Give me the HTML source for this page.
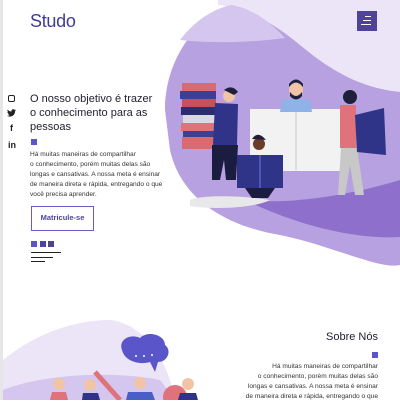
<!DOCTYPE html>
<html><head><meta charset="utf-8"><style>
*{margin:0;padding:0;box-sizing:border-box}
body{width:400px;height:400px;overflow:hidden;background:#fff;font-family:"Liberation Sans",sans-serif;position:relative}
.edge{position:absolute;left:0;top:0;width:3px;height:400px;background:#e6e6e6}
.abs{position:absolute}
.logo{left:30px;top:11px;font-size:18px;color:#3e3b9b;letter-spacing:-0.3px}
h1{position:absolute;left:30px;top:92px;font-size:11px;font-weight:normal;line-height:14px;color:#1f1f2e}
p{position:absolute;font-size:6.6px;line-height:10px;color:#333}
.sq{position:absolute;width:6px;height:6px;background:#5a55c8}
.btn{position:absolute;left:31px;top:206px;width:63px;height:25px;border:1.5px solid #6b5bc2;color:#4b43a8;font-size:7.5px;font-weight:bold;text-align:center;line-height:22px}
.ln{position:absolute;height:1.3px;background:#222}
</style></head><body>
<svg class="abs" style="left:0;top:0" width="400" height="400" viewBox="0 0 400 400">
<path d="M165 110 C165 60 195 20 230 5 L400 5 L400 265 C380 270 330 245 280 235 C220 225 180 195 170 150Z" fill="#b7a1e0"/>
<path d="M218 0 L400 0 L400 92 C360 88 330 70 300 45 C270 20 245 8 218 5Z" fill="#ece4f7"/>
<path d="M180 40 C195 20 215 8 232 5 C255 10 270 22 285 38 C255 42 215 44 180 40Z" fill="#d4c6ee"/>
<path d="M245 200 C290 205 350 195 400 180 L400 237 C350 240 290 222 245 200Z" fill="#8f6fcc"/>
<path d="M190 200 C200 195 240 195 270 200 C255 208 215 210 190 206Z" fill="#e8e8ea"/>
<rect x="182" y="83" width="34" height="8" fill="#d86a74"/><rect x="180" y="91" width="36" height="8" fill="#3d3f94"/><rect x="182" y="99" width="34" height="8" fill="#c94f5c"/><rect x="181" y="107" width="36" height="8" fill="#2a2e6e"/><rect x="183" y="115" width="33" height="8" fill="#d9d9e5"/><rect x="181" y="123" width="35" height="8" fill="#e0727c"/><rect x="183" y="131" width="33" height="6" fill="#3d3f94"/><rect x="182" y="137" width="34" height="12" fill="#d86a74"/>
<circle cx="229" cy="96" r="6" fill="#f2c4a6"/><path d="M224 90 Q232 84 238 92 L234 95Z" fill="#1f1f3a"/>
<path d="M215 103 L238 104 L237 145 L213 145Z" fill="#2f3488"/>
<path d="M212 145 L238 145 L236 180 L226 180 L224 160 L220 180 L212 180Z" fill="#1b1d40"/>
<rect x="250" y="109" width="92" height="62" fill="#f2f2f2"/><path d="M296 110 L296 170" stroke="#ddd" stroke-width="2"/>
<circle cx="296" cy="90" r="7" fill="#f2c4a6"/><path d="M289 87 Q296 78 303 87 L303 84 Q296 75 289 84Z" fill="#1f1f3a"/><path d="M290 92 Q296 100 302 92 L302 96 Q296 103 290 96Z" fill="#1f1f3a"/>
<path d="M282 100 L310 100 L312 112 L280 112Z" fill="#8fb2e8"/>
<circle cx="350" cy="97" r="7" fill="#1f1f3a"/>
<path d="M340 105 L356 105 L356 148 L340 148Z" fill="#e0727c"/>
<path d="M341 148 L357 148 L364 195 L355 195 L350 165 L345 195 L338 195Z" fill="#c8c8c8"/>
<path d="M355 115 L384 108 L386 155 L357 152Z" fill="#2f3488"/>
<circle cx="259" cy="144" r="6" fill="#6a3a2a"/><path d="M252 139 Q258 130 266 140" fill="#1f1f3a"/>
<rect x="237" y="155" width="46" height="33" fill="#2f3488"/><path d="M260 155 L260 188" stroke="#5a60c8" stroke-width="1.5"/>
<path d="M245 188 L275 188 L268 198 L252 198Z" fill="#1b1d40"/>
</svg>
<div class="edge"></div>
<div class="abs logo">Studo</div>
<div class="abs" style="left:357px;top:11px;width:20px;height:20px;background:#4f4399"><div class="ln" style="background:#fff;left:8px;top:5px;width:6px;height:1px"></div><div class="ln" style="background:#fff;left:6px;top:9px;width:8px;height:1px"></div><div class="ln" style="background:#fff;left:4px;top:13px;width:10px;height:1px"></div></div>
<div class="abs" style="left:8px;top:95px;width:7px;height:7px;border:1.2px solid #222;border-radius:2px"></div>
<svg class="abs" style="left:7px;top:109px" width="9" height="8" viewBox="0 0 24 20"><path d="M24 2.5c-.9.4-1.8.6-2.8.8 1-.6 1.8-1.6 2.2-2.7-1 .6-2 1-3.1 1.2C19.3.7 18 0 16.6 0c-2.7 0-4.9 2.2-4.9 4.9 0 .4 0 .8.1 1.1C7.7 5.8 4.1 3.9 1.7.9c-.4.7-.7 1.6-.7 2.5 0 1.7.9 3.2 2.2 4.1-.8 0-1.6-.2-2.2-.6v.1c0 2.4 1.7 4.4 3.9 4.8-.4.1-.8.2-1.3.2-.3 0-.6 0-.9-.1.6 2 2.4 3.4 4.6 3.4-1.7 1.3-3.8 2.1-6.1 2.1-.4 0-.8 0-1.2-.1C2.2 18.8 4.8 19.6 7.5 19.6c9.1 0 14-7.5 14-14v-.6c1-.7 1.8-1.6 2.5-2.5z" fill="#222"/></svg>
<div class="abs" style="left:10px;top:123px;font-size:9px;font-weight:bold;color:#222">f</div>
<div class="abs" style="left:8px;top:140px;font-size:9px;font-weight:bold;color:#222">in</div>
<h1>O nosso objetivo é trazer<br>o conhecimento para as<br>pessoas</h1>
<div class="sq" style="left:31px;top:139px"></div>
<p style="left:30px;top:150px">Há muitas maneiras de compartilhar<br>o conhecimento, porém muitas delas são<br>longas e cansativas. A nossa meta é ensinar<br>de maneira direta e rápida, entregando o que<br>você precisa aprender.</p>
<div class="btn">Matricule-se</div>
<div class="sq" style="left:31px;top:241px"></div><div class="sq" style="left:40px;top:241px;background:#4b43a8"></div><div class="sq" style="left:48px;top:241px;background:#4a4a80"></div>
<div class="ln" style="left:31px;top:252px;width:30px"></div><div class="ln" style="left:31px;top:257px;width:22px"></div><div class="ln" style="left:31px;top:261px;width:14px"></div>
<svg class="abs" style="left:0;top:310px" width="240" height="90" viewBox="0 310 240 90">
<path d="M3 360 C40 330 80 320 110 320 C150 325 170 370 175 400 L3 400Z" fill="#ece4f7"/>
<path d="M3 390 C40 375 110 370 160 380 L175 400 L3 400Z" fill="#d4c6ee"/>
<path d="M122 350 C118 340 130 333 140 338 C148 330 165 335 165 345 C172 350 168 362 158 362 L155 372 L150 362 C140 365 125 362 122 350Z" fill="#5a55c8"/>
<circle cx="136" cy="356" r="1" fill="#fff"/><circle cx="144" cy="356" r="1" fill="#fff"/><circle cx="152" cy="355" r="1" fill="#fff"/>
<path d="M95 372 L120 400" stroke="#e0727c" stroke-width="5"/>
<circle cx="59" cy="384" r="6" fill="#f2c4a6"/><path d="M52 392 L66 392 L68 400 L50 400Z" fill="#e0727c"/>
<circle cx="90" cy="385" r="6" fill="#f2c4a6"/><path d="M83 393 L98 393 L100 400 L82 400Z" fill="#2f3488"/>
<circle cx="140" cy="383" r="6" fill="#f2c4a6"/><path d="M128 392 L152 392 L155 400 L126 400Z" fill="#4a5ec8"/>
<circle cx="175" cy="397" r="12" fill="#e0727c"/>
<circle cx="188" cy="384" r="6" fill="#f2c4a6"/><path d="M180 393 L196 393 L198 400 L178 400Z" fill="#2f3488"/>
</svg>
<div class="abs" style="right:22px;top:331px;font-size:11px;color:#1f1f2e">Sobre Nós</div>
<div class="sq" style="left:372px;top:352px"></div>
<p style="right:22px;top:362px;text-align:right">Há muitas maneiras de compartilhar<br>o conhecimento, porém muitas delas são<br>longas e cansativas. A nossa meta é ensinar<br>de maneira direta e rápida, entregando o que</p>
</body></html>
